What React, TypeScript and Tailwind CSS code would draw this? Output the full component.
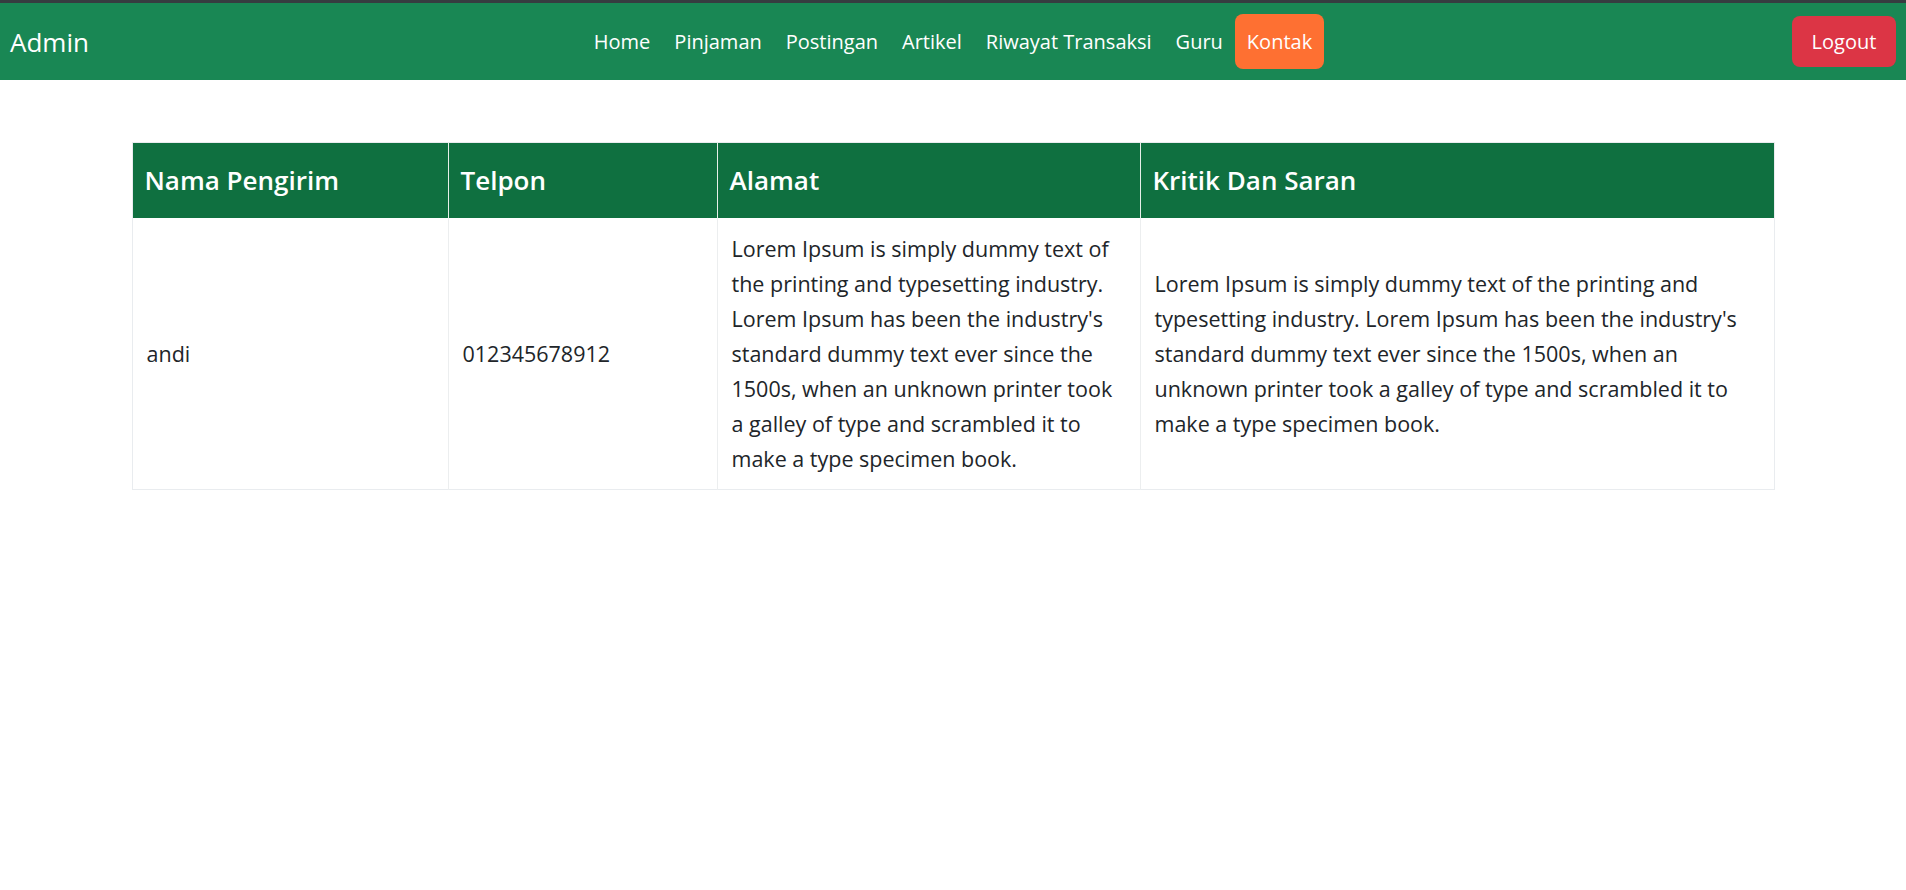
import React from "react";

const lorem =
  "Lorem Ipsum is simply dummy text of the printing and typesetting industry. Lorem Ipsum has been the industry's standard dummy text ever since the 1500s, when an unknown printer took a galley of type and scrambled it to make a type specimen book.";

export default function App() {
  const links = ["Home", "Pinjaman", "Postingan", "Artikel", "Riwayat Transaksi", "Guru"];
  return (
    <div
      className="min-h-[890px] bg-white text-[#212529]"
      style={{ fontFamily: '"Open Sans", "Noto Sans", sans-serif' }}
    >
      <nav className="flex h-[80px] items-center border-t-[3px] border-[#363c40] bg-[#198754] px-[10px]">
        <div className="w-[200px] text-[26px] leading-none text-white">Admin</div>
        <div className="flex flex-1 items-center justify-center">
          <div className="flex items-center">
            {links.map((l) => (
              <a key={l} className="px-[12px] text-[20px] leading-[30px] text-white">
                {l}
              </a>
            ))}
            <a className="flex h-[55px] items-center rounded-[8px] bg-[#fe7032] px-[12px] text-[20px] text-white">
              Kontak
            </a>
          </div>
        </div>
        <div className="flex w-[200px] justify-end">
          <button className="h-[51px] w-[104px] rounded-[8px] bg-[#dc3545] text-[20px] text-white">
            Logout
          </button>
        </div>
      </nav>

      <div className="mx-auto mt-[62px] w-[1643px]">
        <table className="w-full table-fixed border-collapse border border-[#e9ecef]">
          <colgroup>
            <col className="w-[316px]" />
            <col className="w-[269px]" />
            <col className="w-[423px]" />
            <col />
          </colgroup>
          <thead>
            <tr className="bg-[#0f7040] text-white">
              {["Nama Pengirim", "Telpon", "Alamat", "Kritik Dan Saran"].map((h, i) => (
                <th
                  key={h}
                  className={`h-[75px] px-[12px] text-left align-middle text-[26px] font-semibold ${
                    i > 0 ? "border-l border-[#e6efe9]" : ""
                  }`}
                >
                  {h}
                </th>
              ))}
            </tr>
          </thead>
          <tbody>
            <tr className="text-[21.5px] leading-[35px]">
              <td className="px-[14px] py-[13px] align-middle">andi</td>
              <td className="border-l border-[#eceeef] px-[14px] py-[13px] align-middle">012345678912</td>
              <td className="border-l border-[#eceeef] px-[14px] py-[13px] align-middle">{lorem}</td>
              <td className="border-l border-[#eceeef] px-[14px] py-[13px] align-middle">{lorem}</td>
            </tr>
          </tbody>
        </table>
      </div>
    </div>
  );
}
